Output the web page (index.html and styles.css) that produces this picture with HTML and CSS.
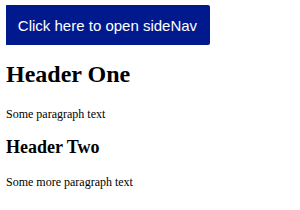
FILE: index.html
```html
<!DOCTYPE html>
<html>
<head>
<meta charset="utf-8">
<link rel="stylesheet" href="styles.css">
</head>
<body>
<button class="open-btn">Click here to open sideNav</button>
<h1 class="title">Header One</h1>
<p class="text">Some paragraph text</p>
<h2 class="subtitle">Header Two</h2>
<p class="text">Some more paragraph text</p>
</body>
</html>
```
FILE: styles.css
```css
body {
  margin: 5px 6px;
  font-family: "Liberation Serif", "Times New Roman", serif;
  color: #000;
  background: #fff;
}
.open-btn {
  display: block;
  width: 205px;
  height: 40px;
  padding: 0 12px;
  border: none;
  border-radius: 2px;
  background: #001a8e;
  color: #fff;
  font-family: "Liberation Sans", Arial, sans-serif;
  font-size: 15px;
  margin-left: -1px;
}
.title {
  font-size: 24px;
  margin: 16px 0 19px;
}
.subtitle {
  font-size: 18px;
  margin: 15px 0 17px;
}
.text {
  font-size: 12px;
  margin: 15px 0;
}
```
